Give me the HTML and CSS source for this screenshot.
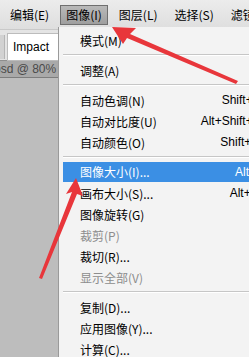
FILE: index.html
```html
<!DOCTYPE html>
<html lang="zh-CN">
<head>
<meta charset="UTF-8" />
<title>图像菜单</title>
<link rel="stylesheet" href="styles.css">
</head>
<body>

<div class="menubar">
  <span class="menu-title">编辑(E)</span>
  <span class="menu-title open">图像(I)</span>
  <span class="menu-title">图层(L)</span>
  <span class="menu-title">选择(S)</span>
  <span class="menu-title">滤镜</span>
</div>

<div class="options">
  <span class="grip"></span>
  <span class="font-box">Impact</span>
</div>

<div class="doc-tab">psd @ 80%</div>
<div class="canvas"></div>

<ul class="dropdown">
  <li class="item">模式(M)</li>
  <li class="sep"></li>
  <li class="item">调整(A)</li>
  <li class="sep"></li>
  <li class="item">自动色调(N)<span class="key">Shift+Ctrl+L</span></li>
  <li class="item">自动对比度(U)<span class="key">Alt+Shift+Ctrl+L</span></li>
  <li class="item">自动颜色(O)<span class="key">Shift+Ctrl+B</span></li>
  <li class="sep"></li>
  <li class="item active">图像大小(I)...<span class="key">Alt+Ctrl+I</span></li>
  <li class="item">画布大小(S)...<span class="key">Alt+Ctrl+C</span></li>
  <li class="item">图像旋转(G)</li>
  <li class="item disabled">裁剪(P)</li>
  <li class="item">裁切(R)...</li>
  <li class="item disabled">显示全部(V)</li>
  <li class="sep"></li>
  <li class="item">复制(D)...</li>
  <li class="item">应用图像(Y)...</li>
  <li class="item">计算(C)...</li>
</ul>

<svg class="arrows" width="249" height="357" viewBox="0 0 249 357">
  <!-- arrow to the menu title -->
  <polygon points="112,27 136,28 130,34 238,81 236,84 127,38 123,44" fill="#e8363b"/>
  <!-- arrow to 图像大小 -->
  <polygon points="76,178 83,196 77,194 42,279 39,278 72,192 66,194" fill="#e8363b"/>
</svg>

</body>
</html>
```

FILE: styles.css
```css
body { margin: 0; width: 249px; height: 357px; overflow: hidden; position: relative; background: #bdbdbd; font-family: "Noto Sans CJK SC", sans-serif; font-size: 12px; color: #000; }

.menubar { height: 30px; display: flex; align-items: center; gap: 5px; padding-left: 4px; background: linear-gradient(#ececec, #dedede); border-bottom: 1px solid #c9c9c9; box-sizing: border-box; }
.menu-title { padding: 1px 5px; line-height: 16px; border: 1px solid transparent; white-space: nowrap; }
.menu-title.open { background: linear-gradient(#b9b9b9, #9e9e9e); border-color: #6f6f6f; }

.options { height: 30px; display: flex; align-items: center; gap: 2px; background: #e4e4e4; box-sizing: border-box; padding-top: 3px; }
.grip { width: 4px; height: 24px; background: #d2d2d2; border-right: 1px solid #b5b5b5; }
.font-box { flex: 1; height: 26px; line-height: 26px; background: #fff; border: 1px solid #bcbcbc; padding-left: 5px; font-family: "Liberation Sans", sans-serif; font-size: 12px; }

.doc-tab { height: 16px; line-height: 16px; margin-left: -6px; background: #a9a9a9; color: #4a4a4a; font-family: "Liberation Sans", sans-serif; font-size: 12px; border-top: 1px solid #8e8e8e; border-bottom: 1px solid #7d7d7d; }
.canvas { height: 280px; }

.dropdown { position: absolute; left: 58px; top: 27px; width: 230px; height: 340px; margin: 0; padding: 3px 3px 0 4px; list-style: none; background: #f3f3f3; border-left: 1px solid #9a9a9a; box-sizing: border-box; }
.item { height: 21px; line-height: 21px; padding-left: 17px; display: flex; white-space: nowrap; }
.item .key { margin-left: auto; font-family: "Liberation Sans", sans-serif; }
.item.active { background: #3b8fe4; color: #fff; height: 20px; line-height: 20px; margin-bottom: 1px; }
.item.disabled { color: #8d8d8d; }
.sep { height: 9px; position: relative; }
.sep::after { content: ""; position: absolute; left: 0; right: 0; top: 3px; border-top: 1px solid #c6c6c6; border-bottom: 1px solid #fff; }

.arrows { position: absolute; left: 0; top: 0; }
```
